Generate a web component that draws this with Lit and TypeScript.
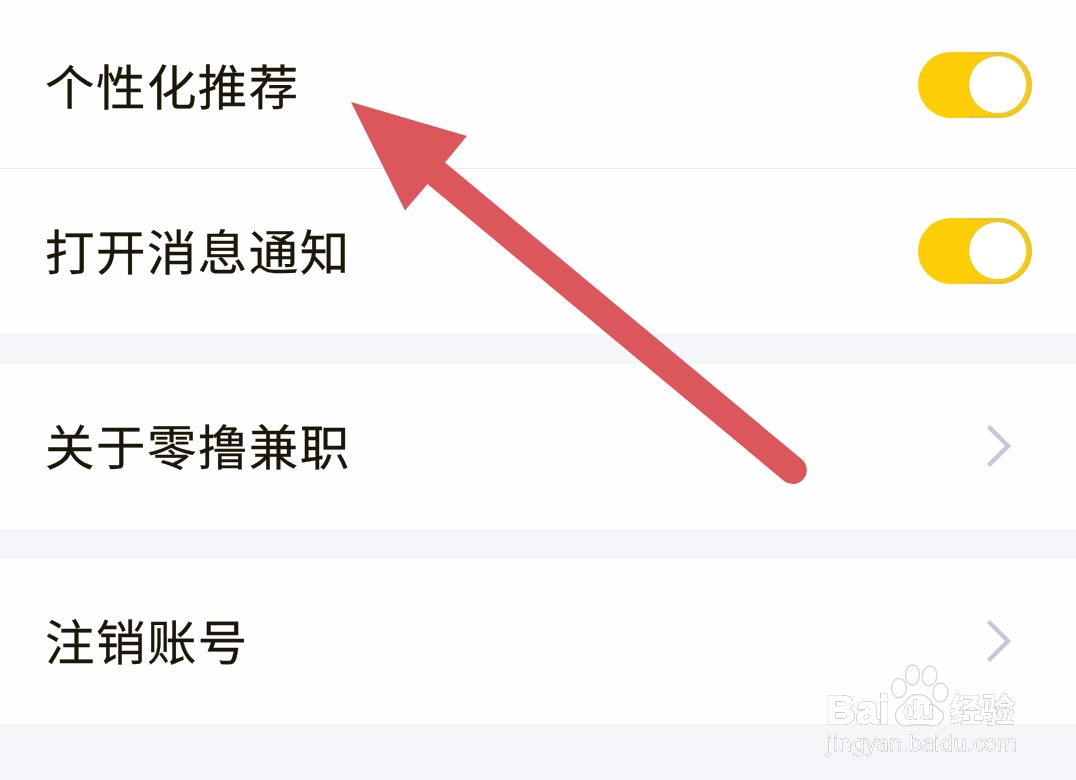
import { LitElement, html, css } from "lit";
import { customElement, property } from "lit/decorators.js";

@customElement("toggle-switch")
export class ToggleSwitch extends LitElement {
  @property({ type: Boolean }) on = false;

  render() {
    return html`
      <svg class="track" width="116" height="68" viewBox="0 0 116 68">
        <rect x="1" y="1" width="114" height="66" rx="33" fill=${this.on ? "#fdcd06" : "#d8d8d8"} />
        <path d="M52 2.5H82A31.5 31.5 0 0 1 82 65.5H52" fill="none" stroke="#ecc52b" stroke-width="3" />
        <circle cx=${this.on ? 80.7 : 33} cy="33.7" r="29" fill="#fff" stroke="#e9c532" />
      </svg>
    `;
  }

  static get styles() {
    return css`
      :host {
        display: block;
        margin-right: -1px;
      }
      .track {
        display: block;
      }
    `;
  }
}

@customElement("setting-row")
export class SettingRow extends LitElement {
  @property() label = "";

  render() {
    return html`
      <span class="label">${this.label}</span>
      <slot></slot>
    `;
  }

  static get styles() {
    return css`
      :host {
        display: flex;
        align-items: center;
        justify-content: space-between;
        box-sizing: border-box;
        height: 165px;
        padding: 0 44px 2px 45px;
        background-color: #fefefe;
      }
      .label {
        padding-bottom: 1px;
        font-size: 49.5px;
        line-height: 60px;
        letter-spacing: 1.45px;
        color: #1b1708;
        -webkit-text-stroke: 0.3px #1b1708;
        transform: scaleY(0.96);
      }
    `;
  }
}

@customElement("app-root")
export class AppRoot extends LitElement {
  chevron() {
    return html`
      <svg class="chevron" width="26" height="44" viewBox="0 0 26 44">
        <path d="M2.5 2.5L22 22L2.5 41.5" fill="none" stroke="#c6c8d5" stroke-width="4.4" />
      </svg>
    `;
  }

  arrow() {
    return html`
      <svg class="arrow" width="1076" height="780" viewBox="0 0 1076 780">
        <path
          d="M351 102L467 136L445 162.5L801.5 459A14 14 0 0 1 784 481L427.5 184L405 210.5Z"
          fill="#db575c"
        />
      </svg>
    `;
  }

  watermark() {
    return html`
      <svg class="watermark" width="210" height="100" viewBox="820 660 210 100">
        <g fill="#fff" stroke="#d6d6d8" stroke-width="1.3">
          <ellipse cx="899" cy="688" rx="7.5" ry="9.7" />
          <ellipse cx="912.5" cy="675" rx="7" ry="10" />
          <ellipse cx="929.5" cy="676" rx="7.3" ry="9.7" transform="rotate(10 929.5 676)" />
          <ellipse cx="940.5" cy="692.5" rx="7.6" ry="9.5" />
          <path
            d="M919 694.5C926 694.5 929 698 932 703C936 708 944 710 943.5 716C943 724 937 726 931 725.5C923 724.5 915 724.5 908 725.5C900 726.5 895 722 895.5 714C896 708 903 706 906 701C909 696 912 694.5 919 694.5Z"
          />
        </g>
        <g class="words">
          <text class="brand" x="826" y="723.5" textLength="64" lengthAdjust="spacingAndGlyphs">Bai</text>
          <text class="du" x="903" y="719" textLength="31" lengthAdjust="spacingAndGlyphs">du</text>
          <text class="cjk" x="950" y="721.5" textLength="65">经验</text>
          <text class="url" x="827" y="750.5" textLength="190">jingyan.baidu.com</text>
        </g>
      </svg>
    `;
  }

  render() {
    return html`
      <div class="group">
        <setting-row class="first" label="个性化推荐"><toggle-switch on></toggle-switch></setting-row>
        <setting-row label="打开消息通知"><toggle-switch on></toggle-switch></setting-row>
      </div>
      <div class="group">
        <setting-row label="关于零撸兼职">${this.chevron()}</setting-row>
      </div>
      <div class="group">
        <setting-row label="注销账号">${this.chevron()}</setting-row>
      </div>
      ${this.arrow()} ${this.watermark()}
    `;
  }

  static get styles() {
    return css`
      :host {
        display: flex;
        flex-direction: column;
        gap: 30px;
        position: relative;
        box-sizing: border-box;
        width: 1076px;
        height: 780px;
        overflow: hidden;
        background-color: #f5f6fa;
        font-family: "Noto Sans CJK SC", sans-serif;
      }
      .first {
        height: 169px;
        padding-top: 2px;
        padding-bottom: 0;
        border-bottom: 1px solid #ebebeb;
      }
      .chevron {
        display: block;
        margin-right: 20px;
      }
      .arrow {
        position: absolute;
        top: 0;
        left: 0;
      }
      .watermark {
        position: absolute;
        top: 660px;
        left: 820px;
      }
      .words {
        fill: #fff;
        stroke: #fff;
        stroke-width: 1.6;
        filter: drop-shadow(0 0 0.6px #777) drop-shadow(0 0 0.4px #bbb);
      }
      .words .brand {
        font: bold 41px "Liberation Sans", sans-serif;
      }
      .words .du {
        font: 26px "Liberation Sans", sans-serif;
        stroke-width: 0.6;
      }
      .words .cjk {
        font: bold 32.5px "Noto Sans CJK SC", sans-serif;
        stroke-width: 0.5;
      }
      .words .url {
        font: 22px "Noto Sans", sans-serif;
        stroke-width: 0.3;
      }
    `;
  }
}
